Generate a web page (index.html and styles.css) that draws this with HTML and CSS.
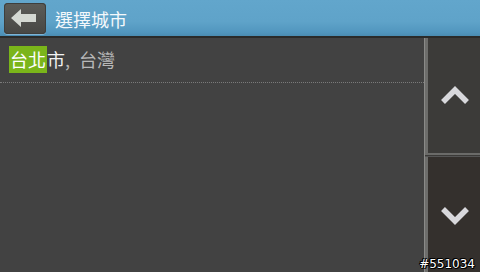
FILE: index.html
```html
<!DOCTYPE html>
<html>
<head>
<meta charset="utf-8">
<link rel="stylesheet" href="styles.css">
</head>
<body>
<div class="app">
  <header class="bar">
    <button class="back">
      <svg width="26" height="18" viewBox="0 0 26 18"><path d="M0 9 L10 0 L10 5 L25 5 L25 13 L10 13 L10 18 Z" fill="#d4d8d2"/></svg>
    </button>
    <h1 class="title">選擇城市</h1>
  </header>
  <main class="main">
    <section class="list">
      <div class="row"><span class="hl">台北</span><span class="rest">市</span><span class="comma">,</span><span class="country">台灣</span></div>
    </section>
    <aside class="scroller">
      <div class="btn up">
        <svg width="30" height="20" viewBox="0 0 30 20"><path d="M3 16 L15 4 L27 16" fill="none" stroke="#d8d8dc" stroke-width="5.5" stroke-linejoin="miter"/></svg>
      </div>
      <div class="btn down">
        <svg width="30" height="20" viewBox="0 0 30 20"><path d="M3 4 L15 16 L27 4" fill="none" stroke="#d8d8dc" stroke-width="5.5" stroke-linejoin="miter"/></svg>
      </div>
    </aside>
  </main>
  <div class="tag">#551034</div>
</div>
</body>
</html>
```
FILE: styles.css
```css
* { box-sizing: border-box; margin: 0; padding: 0; }
html, body { width: 480px; height: 272px; overflow: hidden; background: #424242; }
body { font-family: "Noto Sans CJK TC", "Noto Sans", sans-serif; }
.app { width: 480px; height: 272px; display: flex; flex-direction: column; position: relative; }
.bar {
  height: 38px; flex: none;
  background: linear-gradient(#62a6cc 0%, #5fa3c9 60%, #5196be 90%, #4a8cb2 100%);
  border-bottom: 2px solid #2a2b2a;
  display: flex; align-items: center; padding-left: 4px; gap: 9px;
}
.back {
  width: 42px; height: 31px; border: none; border-radius: 4px;
  background: linear-gradient(#5c5c58, #474744);
  box-shadow: inset 0 0 0 1px #3e3e3c, 0 1px 0 #7fb3d3;
  display: flex; align-items: center; justify-content: center; padding-right: 2px;
}
.title { font-size: 18px; font-weight: normal; color: #f4f8fb; line-height: 1; margin-top: 1px; }
.main { flex: 1; display: flex; min-height: 0; }
.list { flex: 1; }
.row {
  height: 45px; display: flex; align-items: center; padding-left: 9px;
  font-size: 18px; line-height: 1;
  border-bottom: 1px dotted #7a7a7a;
  padding-bottom: 2px;
}
.hl { background: #7ab51a; color: #fff; padding: 4px 1px 5px 1px; }
.rest { color: #f2f2f2; }
.comma { color: #b8b8b8; margin-right: 9px; }
.country { color: #b8b8b8; }
.scroller {
  width: 56px; flex: none; display: flex; flex-direction: column;
  border-left: 1px solid #8a8a88; background: #3b3a38;
}
.btn { flex: 1; display: flex; align-items: center; justify-content: center; padding-left: 4px; }
.up { background: #3c3b39; border-bottom: 2px solid #6b6b69; box-shadow: inset 3px 0 0 #6d6d6b; margin-bottom: 1px; }
.down { background: #34302d; box-shadow: inset 3px 0 0 #6d6d6b; border-top: 1px solid #555; }
.tag {
  position: absolute; right: 5px; bottom: 1px;
  font-family: "DejaVu Sans", sans-serif; font-size: 12px; color: #fff;
  text-shadow: -1px 0 #000, 1px 0 #000, 0 -1px #000, 0 1px #000, 1px 1px #000, -1px -1px #000;
}
```
